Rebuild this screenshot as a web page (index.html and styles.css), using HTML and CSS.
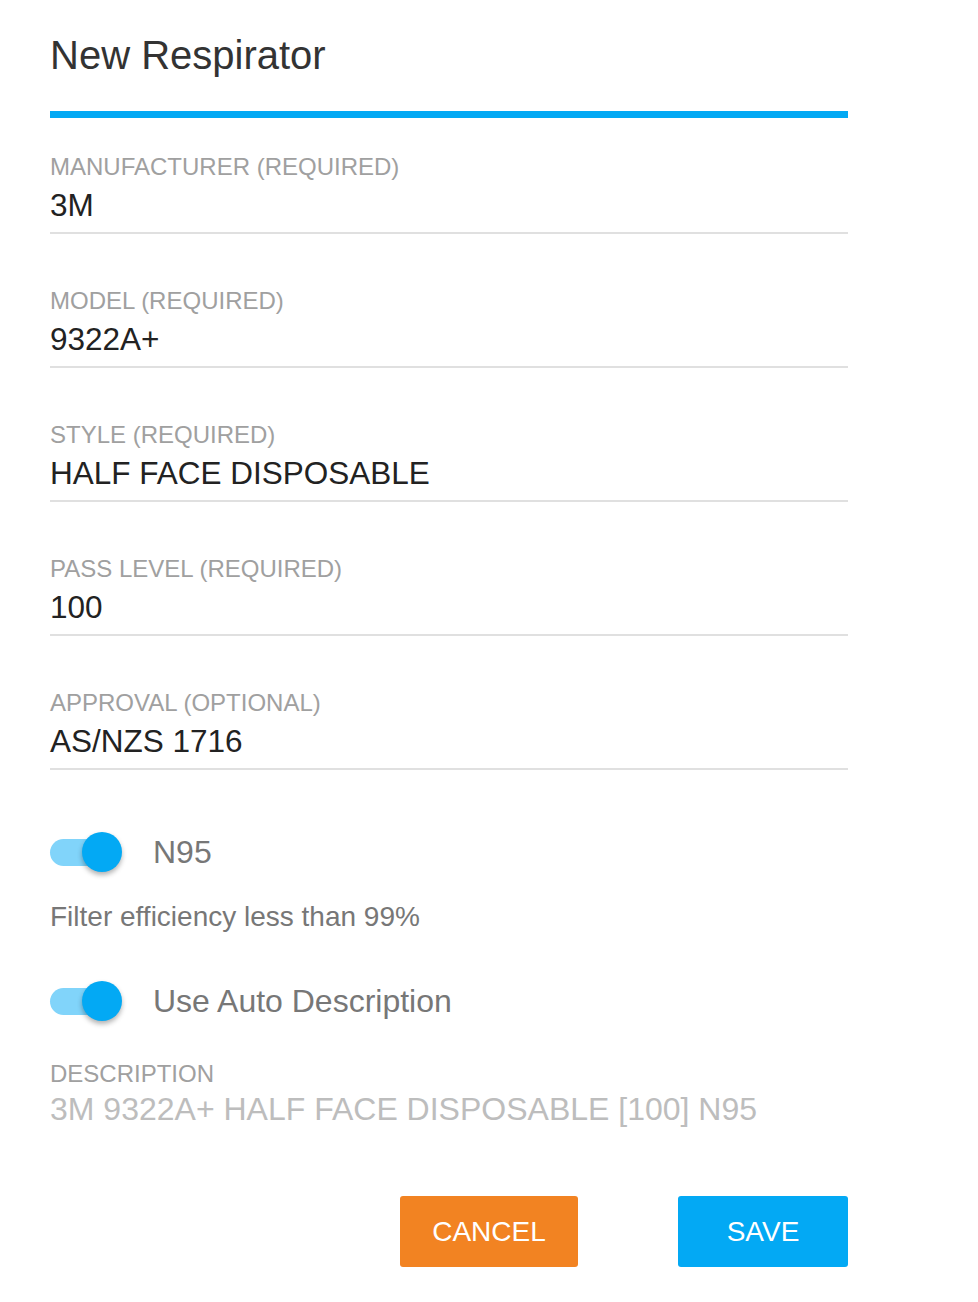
FILE: index.html
```html
<!DOCTYPE html>
<html lang="en">

<head>
	<meta charset="UTF-8">
	<meta name="viewport" content="width=device-width, initial-scale=1.0">
	<title>New Respirator</title>
	<link rel="stylesheet" href="styles.css">
</head>

<body>
	<div class="dialog">
		<div class="dialog__title">New Respirator</div>
		<div class="dialog__bar"></div>

		<!--fields-->
		<div class="field">
			<div class="field__label">Manufacturer (required)</div>
			<div class="field__value">3M</div>
		</div>
		<div class="field">
			<div class="field__label">Model (required)</div>
			<div class="field__value">9322A+</div>
		</div>
		<div class="field">
			<div class="field__label">Style (required)</div>
			<div class="field__value">HALF FACE DISPOSABLE</div>
		</div>
		<div class="field">
			<div class="field__label">Pass level (required)</div>
			<div class="field__value">100</div>
		</div>
		<div class="field">
			<div class="field__label">Approval (optional)</div>
			<div class="field__value">AS/NZS 1716</div>
		</div>

		<!--toggles-->
		<div class="toggle toggle--first">
			<div class="toggle__switch">
				<div class="toggle__track"></div>
				<div class="toggle__knob"></div>
			</div>
			<div class="toggle__label">N95</div>
		</div>
		<div class="hint">Filter efficiency less than 99%</div>
		<div class="toggle toggle--second">
			<div class="toggle__switch">
				<div class="toggle__track"></div>
				<div class="toggle__knob"></div>
			</div>
			<div class="toggle__label">Use Auto Description</div>
		</div>

		<div class="desc">
			<div class="field__label">Description</div>
			<div class="desc__value">3M 9322A+ HALF FACE DISPOSABLE [100] N95</div>
		</div>

		<div class="actions">
			<button class="btn btn--cancel">Cancel</button>
			<button class="btn btn--save">Save</button>
		</div>
	</div>
</body>

</html>
```

FILE: styles.css
```css
* {
	margin: 0;
	padding: 0;
	box-sizing: border-box;
}

body {
	background: #fff;
	font-family: "Liberation Sans", Arial, sans-serif;
}

.dialog {
	width: 848px;
	padding: 31px 0 0 50px;
}

.dialog__title {
	font-size: 40px;
	line-height: 48px;
	color: #333;
}

.dialog__bar {
	height: 7px;
	margin-top: 32px;
	background: #03a9f4;
}

.field {
	margin-top: 55px;
	padding-bottom: 8px;
	border-bottom: solid 2px #e0e0e0;
}

.dialog__bar + .field {
	margin-top: 37px;
}

.field__label {
	font-size: 24px;
	line-height: 24px;
	color: #a0a0a0;
	text-transform: uppercase;
}

.field__value {
	margin-top: 7px;
	font-size: 31.5px;
	line-height: 38px;
	color: #222;
}

.toggle {
	display: flex;
	align-items: center;
	height: 40px;
}

.toggle--first {
	margin-top: 62px;
}

.toggle--second {
	margin-top: 48px;
}

.toggle__switch {
	position: relative;
	width: 72px;
	height: 40px;
	margin-right: 31px;
}

.toggle__track {
	position: absolute;
	left: 0;
	top: 7px;
	width: 68px;
	height: 27px;
	border-radius: 14px;
	background: #81d4fa;
}

.toggle__knob {
	position: absolute;
	left: 32px;
	top: 0;
	width: 40px;
	height: 40px;
	border-radius: 50%;
	background: #03a9f4;
	box-shadow: 0 3px 5px rgba(0, 0, 0, 0.3);
}

.toggle__label {
	font-size: 32px;
	line-height: 40px;
	color: #777;
}

.hint {
	margin-top: 29px;
	font-size: 28px;
	line-height: 32px;
	color: #777;
}

.desc {
	margin-top: 41px;
}

.desc__value {
	margin-top: 4px;
	font-size: 32px;
	line-height: 38px;
	color: #bdbdbd;
}

.actions {
	display: flex;
	justify-content: flex-end;
	gap: 100px;
	margin-top: 68px;
}

.btn {
	height: 71px;
	border: none;
	border-radius: 3px;
	color: #fff;
	font-family: "Liberation Sans", Arial, sans-serif;
	font-size: 28px;
	text-transform: uppercase;
}

.btn--cancel {
	width: 178px;
	background: #f28322;
}

.btn--save {
	width: 170px;
	background: #03a9f4;
}
```
